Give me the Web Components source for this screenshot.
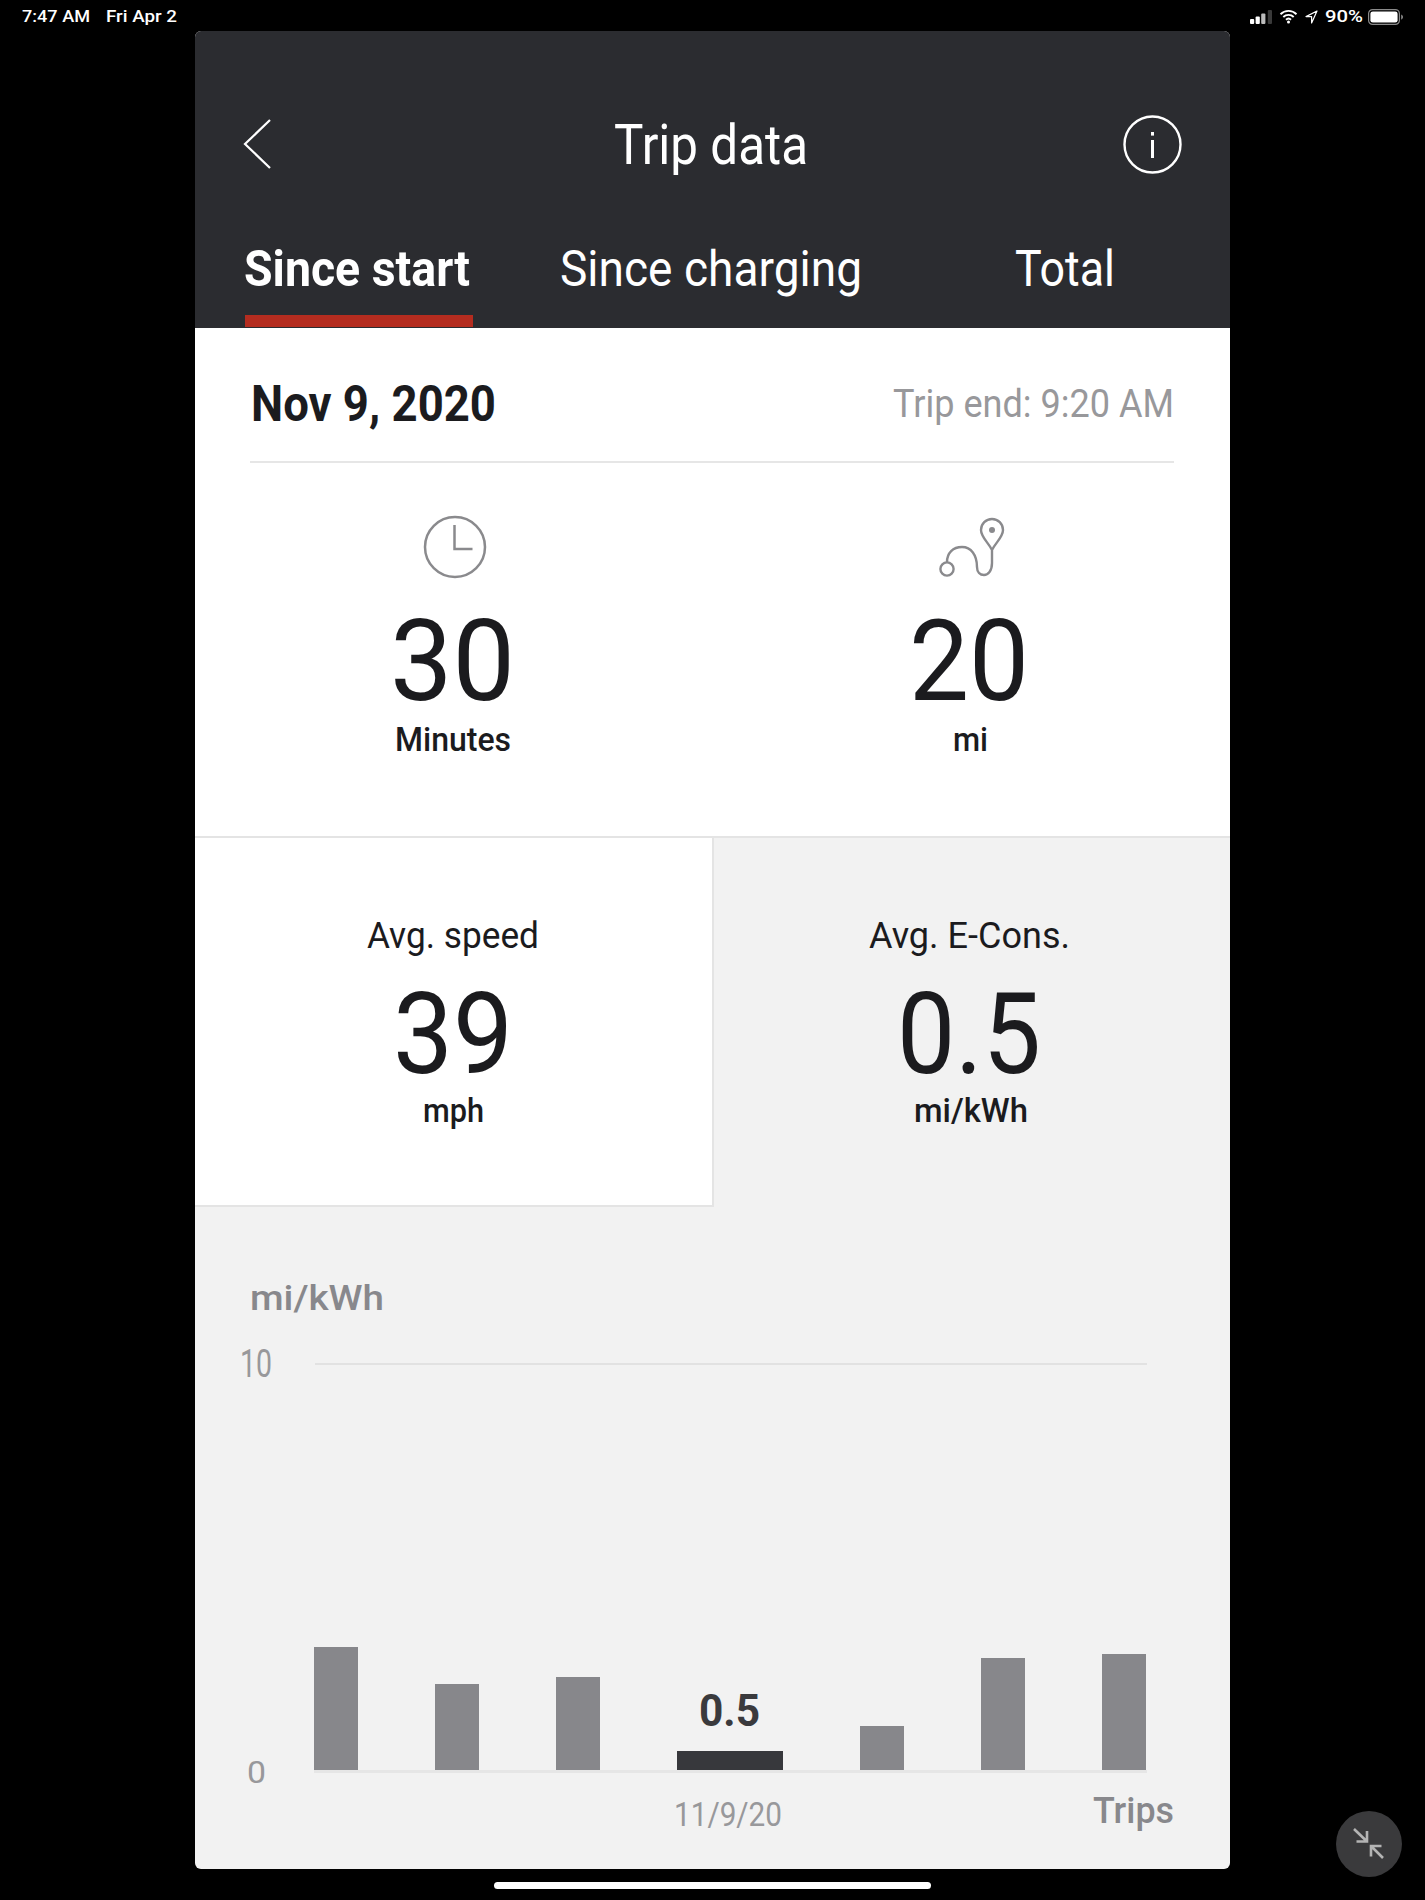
<!DOCTYPE html>
<html>
<head>
<meta charset="utf-8">
<title>Trip data</title>
<style>
  html, body { margin: 0; background: #000; }
  body { height: 1900px; overflow: hidden; position: relative; font-family: Roboto, "Liberation Sans", sans-serif; }
</style>
</head>
<body>
<status-bar></status-bar>
<trip-card>
  <trip-header></trip-header>
  <trip-summary></trip-summary>
  <trip-stats></trip-stats>
  <trip-chart></trip-chart>
</trip-card>
<home-bar></home-bar>
<float-button></float-button>

<script>
// text in the app's font is narrower than Roboto, so each label is squeezed to its width
class FitText extends HTMLElement {
  constructor() {
    super();
    this.attachShadow({ mode: "open" });
  }
  connectedCallback() {
    const size = this.getAttribute("s") || 16;
    const weight = this.getAttribute("w") || 400;
    this.shadowRoot.innerHTML = `
      <style>
        :host{display:block;height:${size}px;line-height:${size}px;font:${weight} ${size}px/${size}px Roboto,"Liberation Sans",sans-serif;white-space:nowrap}
        span{display:inline-block;transform-origin:0 0}
      </style>
      <span><slot></slot></span>`;
    const fit = Number(this.getAttribute("fit"));
    if (fit) {
      const span = this.shadowRoot.querySelector("span");
      const natural = span.getBoundingClientRect().width;
      span.style.transform = `scaleX(${fit / natural})`;
      this.style.width = fit + "px";
    }
  }
}
customElements.define("fit-text", FitText);

class StatusBar extends HTMLElement {
  connectedCallback() {
    this.attachShadow({ mode: "open" }).innerHTML = `
      <style>
        :host{display:flex;align-items:center;box-sizing:border-box;height:31px;padding:2px 0 0 22px;color:#fff}
        .gap{width:16px}
        .right{margin-left:auto;display:flex;align-items:center;padding-right:21px}
        svg{display:block}
      </style>
      <fit-text s="17" w="500" fit="68">7:47 AM</fit-text>
      <div class="gap"></div>
      <fit-text s="17" w="500" fit="71">Fri Apr 2</fit-text>
      <div class="right">
        <svg width="23" height="16" viewBox="0 0 23 16" style="margin-right:6px">
          <rect x="0" y="10" width="4.2" height="5" rx="1" fill="#fff"/>
          <rect x="5.6" y="7.5" width="4.2" height="7.5" rx="1" fill="#fff"/>
          <rect x="11.2" y="4.5" width="4.2" height="10.5" rx="1" fill="#bbb"/>
          <rect x="17.8" y="1" width="4.2" height="14" rx="1" fill="#3a3a3a"/>
        </svg>
        <svg width="19" height="15" viewBox="0 0 19 15" style="margin-right:7px">
          <path d="M1.5 5.2a11.4 11.4 0 0 1 16 0M4.3 8a7.4 7.4 0 0 1 10.4 0M7 10.7a3.6 3.6 0 0 1 5 0" fill="none" stroke="#fff" stroke-width="1.9"/>
          <circle cx="9.5" cy="13" r="1.5" fill="#fff"/>
        </svg>
        <svg width="13" height="14" viewBox="0 0 13 14" style="margin-right:7px">
          <path d="M12 1 1 6.6h5.6V13Z" fill="none" stroke="#fff" stroke-width="1.2" stroke-linejoin="round"/>
        </svg>
        <fit-text s="17" w="500" fit="38">90%</fit-text>
        <svg width="36" height="16" viewBox="0 0 36 16" style="margin-left:5px">
          <rect x=".6" y=".6" width="30.8" height="14.8" rx="4" fill="none" stroke="#8a8a8a" stroke-width="1.2"/>
          <rect x="2.4" y="2.4" width="27.2" height="11.2" rx="2.4" fill="#fff"/>
          <path d="M33.2 5.4c1.1.4 1.8 1.4 1.8 2.6s-.7 2.2-1.8 2.6Z" fill="#8a8a8a"/>
        </svg>
      </div>`;
  }
}
customElements.define("status-bar", StatusBar);

class TripCard extends HTMLElement {
  connectedCallback() {
    this.attachShadow({ mode: "open" }).innerHTML = `
      <style>
        :host{display:block;width:1035px;height:1838px;margin-left:195px;background:#f2f2f2;border-radius:6px;overflow:hidden}
      </style>
      <slot></slot>`;
  }
}
customElements.define("trip-card", TripCard);

class TripTab extends HTMLElement {
  connectedCallback() {
    this.attachShadow({ mode: "open" }).innerHTML = `
      <style>
        :host{display:block}
        .line{height:12px;margin-top:21px}
        :host([active]) .line{background:#b42c1f}
      </style>
      <slot></slot>
      <div class="line"></div>`;
  }
}
customElements.define("trip-tab", TripTab);

class TripHeader extends HTMLElement {
  connectedCallback() {
    this.attachShadow({ mode: "open" }).innerHTML = `
      <style>
        :host{display:block;height:297px;background:#2b2c30;color:#fff;box-sizing:border-box;padding-top:84px}
        .top{display:grid;grid-template-columns:1fr auto 1fr;align-items:center;height:59px;padding:0 48px}
        .title{margin-right:4px}
        .info{justify-self:end}
        svg{display:block}
        .tabs{display:flex;margin-top:70px;padding-left:50px}
        .tabs trip-tab:nth-child(1){width:228px}
        .tabs trip-tab:nth-child(2){margin-left:87px}
        .tabs trip-tab:nth-child(3){margin-left:153px}
      </style>
      <div class="top">
        <svg width="28" height="52" viewBox="0 0 28 52" style="margin-top:-1px">
          <path d="M27 2 2 26l25 24" fill="none" stroke="#fff" stroke-width="2.2"/>
        </svg>
        <fit-text class="title" s="56" w="400" fit="194">Trip data</fit-text>
        <svg class="info" width="59" height="59" viewBox="0 0 59 59">
          <circle cx="29.5" cy="29.5" r="28" fill="none" stroke="#fff" stroke-width="2.4"/>
          <rect x="28" y="25" width="3" height="18" fill="#fff"/>
          <rect x="28" y="17" width="3" height="3.6" fill="#fff"/>
        </svg>
      </div>
      <div class="tabs">
        <trip-tab active><fit-text s="50" w="700" fit="226" style="margin-left:-1px">Since start</fit-text></trip-tab>
        <trip-tab><fit-text s="50" w="400" fit="302">Since charging</fit-text></trip-tab>
        <trip-tab><fit-text s="50" w="400" fit="100">Total</fit-text></trip-tab>
      </div>`;
  }
}
customElements.define("trip-header", TripHeader);

class MetricCell extends HTMLElement {
  connectedCallback() {
    this.attachShadow({ mode: "open" }).innerHTML = `
      <style>
        :host{display:flex;flex-direction:column;align-items:center;box-sizing:border-box}
        ::slotted([slot=value]){margin-right:5px}
      </style>
      <slot name="top"></slot>
      <slot name="value"></slot>
      <slot name="unit"></slot>`;
  }
}
customElements.define("metric-cell", MetricCell);

class TripSummary extends HTMLElement {
  connectedCallback() {
    this.attachShadow({ mode: "open" }).innerHTML = `
      <style>
        :host{display:block;height:510px;padding-top:51px;background:#fff;color:#1b1b1e;box-sizing:border-box;border-bottom:2px solid #e4e4e4}
        .head{display:flex;justify-content:space-between;align-items:center;margin:0 56px}
        .end{color:#98989b}
        .rule{height:2px;background:#e6e6e6;margin:32px 56px 0 55px}
        .cells{display:grid;grid-template-columns:519px 516px}
        metric-cell{padding-top:52px}
        svg{display:block}
        [slot=value]{margin-top:25px}
        [slot=unit]{margin-top:4px;margin-right:3px}
      </style>
      <div class="head">
        <fit-text s="50" w="700" fit="245">Nov 9, 2020</fit-text>
        <fit-text class="end" s="39" w="400" fit="281">Trip end: 9:20 AM</fit-text>
      </div>
      <div class="rule"></div>
      <div class="cells">
        <metric-cell>
          <svg slot="top" width="64" height="64" viewBox="0 0 64 64" fill="none" stroke="#8a8a8d" stroke-width="2.5">
            <circle cx="32" cy="32" r="30"/>
            <path d="M31.5 10V34H49.5"/>
          </svg>
          <fit-text slot="value" s="114" w="400" fit="125">30</fit-text>
          <fit-text slot="unit" s="34" w="500" fit="116">Minutes</fit-text>
        </metric-cell>
        <metric-cell>
          <svg slot="top" width="72" height="64" viewBox="0 0 72 64" fill="none" stroke="#8a8a8d" stroke-width="2.4">
            <path d="M56 35C52 27 45 22 45 15A11 11 0 0 1 67 15C67 22 60 27 56 35ZM56 35V48C56 56 52 60 48 60C44 60 41 57 41 52C41 40 35 32 26 32C17 32 11 38 11 47"/>
            <circle cx="11" cy="54" r="6.6"/>
            <circle cx="56" cy="15" r="3" fill="#8a8a8d" stroke="none"/>
          </svg>
          <fit-text slot="value" s="114" w="400" fit="120" style="margin-right:7px">20</fit-text>
          <fit-text slot="unit" s="34" w="500" fit="35">mi</fit-text>
        </metric-cell>
      </div>`;
  }
}
customElements.define("trip-summary", TripSummary);

class TripStats extends HTMLElement {
  connectedCallback() {
    this.attachShadow({ mode: "open" }).innerHTML = `
      <style>
        :host{display:grid;grid-template-columns:519px 516px;height:369px;color:#1b1b1e}
        metric-cell{padding-top:79px}
        .white{background:#fff;border-right:2px solid #e4e4e4;border-bottom:2px solid #e4e4e4}
        [slot=top]{margin-right:2px}
        [slot=value]{margin-top:23px}
        [slot=unit]{margin-top:2px}
      </style>
      <metric-cell class="white">
        <fit-text slot="top" s="37" w="400" fit="172">Avg. speed</fit-text>
        <fit-text slot="value" s="114" w="400" fit="120" style="margin-right:1px">39</fit-text>
        <fit-text slot="unit" s="34" w="500" fit="61">mph</fit-text>
      </metric-cell>
      <metric-cell>
        <fit-text slot="top" s="37" w="400" fit="201" style="margin-right:5px">Avg. E-Cons.</fit-text>
        <fit-text slot="value" s="114" w="400" fit="144" style="margin-right:7px">0.5</fit-text>
        <fit-text slot="unit" s="34" w="500" fit="114" style="margin-right:3px">mi/kWh</fit-text>
      </metric-cell>`;
  }
}
customElements.define("trip-stats", TripStats);

class TripChart extends HTMLElement {
  connectedCallback() {
    this.attachShadow({ mode: "open" }).innerHTML = `
      <style>
        :host{display:block;padding-top:74px;color:#98989b}
        .title{margin-left:55px;color:#88888c}
        .top{display:flex;align-items:center;margin:29px 0 0 45px}
        .grid{width:832px;height:2px;background:#e2e2e2;margin-left:43px}
        .plot{display:flex;align-items:flex-end;height:389px}
        .zero{margin:0 48px -16px 52px}
        .bars{display:flex;gap:77px;align-items:flex-end;height:387px;width:833px;border-bottom:3px solid #e6e6e6;margin-bottom:-1px}
        .bar{width:44px;background:#87878b}
        .now{display:flex;flex-direction:column;align-items:center;width:106px}
        .now i{display:block;width:106px;height:19px;background:#37383c;margin-top:18px}
        .now fit-text{color:#3a3a3d;margin-right:1px}
        .foot{display:flex;align-items:flex-start;padding-left:479px}
        .date{margin-top:25px}
        .trips{margin:21px 0 0 311px;color:#88888c}
      </style>
      <fit-text class="title" s="35" w="500" fit="134">mi/kWh</fit-text>
      <div class="top">
        <fit-text s="38" w="400" fit="32">10</fit-text>
        <div class="grid"></div>
      </div>
      <div class="plot">
        <fit-text class="zero" s="32" w="400" fit="19">0</fit-text>
        <div class="bars">
          <div class="bar" style="height:123px"></div>
          <div class="bar" style="height:86px"></div>
          <div class="bar" style="height:93px"></div>
          <div class="now"><fit-text s="45" w="700" fit="61">0.5</fit-text><i></i></div>
          <div class="bar" style="height:44px"></div>
          <div class="bar" style="height:112px"></div>
          <div class="bar" style="height:116px"></div>
        </div>
      </div>
      <div class="foot">
        <fit-text class="date" s="34" w="400" fit="108">11/9/20</fit-text>
        <fit-text class="trips" s="36" w="500" fit="81">Trips</fit-text>
      </div>`;
  }
}
customElements.define("trip-chart", TripChart);

class HomeBar extends HTMLElement {
  connectedCallback() {
    this.attachShadow({ mode: "open" }).innerHTML = `
      <style>
        :host{display:block;width:437px;height:7px;margin:13px 0 0 494px;background:#fff;border-radius:4px}
      </style>`;
  }
}
customElements.define("home-bar", HomeBar);

class FloatButton extends HTMLElement {
  connectedCallback() {
    this.attachShadow({ mode: "open" }).innerHTML = `
      <style>
        :host{position:absolute;left:1336px;top:1811px;width:66px;height:66px;border-radius:50%;background:#3a3a3c;display:flex;align-items:center;justify-content:center}
        svg{display:block}
      </style>
      <svg width="34" height="34" viewBox="0 0 34 34" fill="none" stroke="#b4b4b4" stroke-width="2.6">
        <path d="M2 2 15 14.5M15 4V14.5H4.5"/>
        <path d="M31 31 19 19M19 29.5V19H29.5"/>
      </svg>`;
  }
}
customElements.define("float-button", FloatButton);
</script>
</body>
</html>
